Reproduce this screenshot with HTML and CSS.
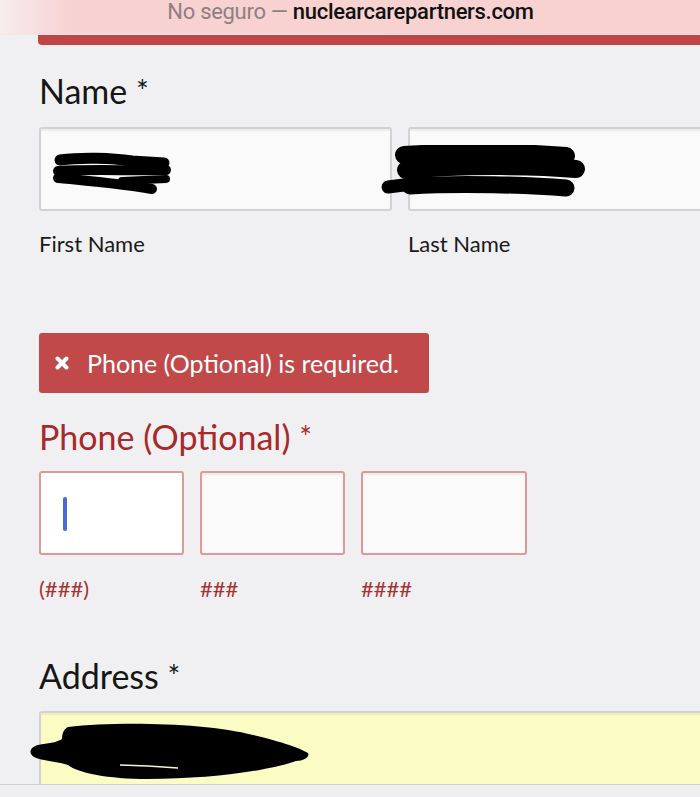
FILE: index.html
```html
<!DOCTYPE html>
<html lang="en">
<head>
<meta charset="utf-8">
<title>Form</title>
<link rel="stylesheet" href="styles.css">
</head>
<body>
<header class="urlbar">
  <span class="url-muted">No seguro — </span><span class="url-host">nuclearcarepartners.com</span>
</header>
<main class="page">
  <div class="topline"></div>
  <form class="form">
    <section class="field field-name">
      <h2 class="field-title">Name <span class="req">*</span></h2>
      <div class="row">
        <div class="col col-name">
          <div class="input"></div>
          <div class="sublabel">First Name</div>
        </div>
        <div class="col col-name">
          <div class="input"></div>
          <div class="sublabel">Last Name</div>
        </div>
      </div>
      <svg class="redact redact-first" width="130" height="50" viewBox="0 0 130 50" aria-hidden="true">
        <g fill="none" stroke="#000" stroke-linecap="round" stroke-linejoin="round">
          <path d="M8 9 C30 6 60 7 80 10 L112 12" stroke-width="11"/>
          <path d="M6 20 C40 18 80 20 114 19" stroke-width="10"/>
          <path d="M6 27 C40 30 70 33 100 38" stroke-width="10"/>
          <path d="M70 30 L114 28" stroke-width="8"/>
        </g>
      </svg>
      <svg class="redact redact-last" width="215" height="60" viewBox="0 0 215 60" aria-hidden="true">
        <g fill="none" stroke="#000" stroke-linecap="round" stroke-linejoin="round">
          <path d="M24 10 C70 7 140 7 186 11" stroke-width="18"/>
          <path d="M26 25 C80 20 150 20 196 24" stroke-width="18"/>
          <path d="M30 41 C80 38 150 40 186 43" stroke-width="17"/>
          <path d="M8 42 L40 38" stroke-width="13"/>
        </g>
      </svg>
    </section>

    <div class="alert">
      <svg class="alert-x" width="14" height="14" viewBox="0 0 14 14" aria-hidden="true">
        <path d="M2.5 2.5 L11.5 11.5 M11.5 2.5 L2.5 11.5" stroke="#fff" stroke-width="4" stroke-linecap="round"/>
      </svg>
      <span>Phone (Optional) is required.</span>
    </div>

    <section class="field field-error">
      <h2 class="field-title">Phone (Optional) <span class="req">*</span></h2>
      <div class="row">
        <div class="col col-area">
          <div class="input input-err input-focus"><span class="caret"></span></div>
          <div class="sublabel">(###)</div>
        </div>
        <div class="col col-area">
          <div class="input input-err"></div>
          <div class="sublabel">###</div>
        </div>
        <div class="col col-line">
          <div class="input input-err"></div>
          <div class="sublabel">####</div>
        </div>
      </div>
    </section>

    <section class="field field-address">
      <h2 class="field-title">Address <span class="req">*</span></h2>
      <div class="input input-auto"></div>
      <svg class="redact redact-addr" width="290" height="64" viewBox="0 0 290 64" aria-hidden="true">
        <path d="M40 8 C90 2 180 4 225 16 C250 22 262 26 272 30 L280 34 C282 38 276 42 268 42 C240 52 180 60 120 60 C80 60 50 54 40 46 C28 42 14 42 6 38 C0 34 2 28 10 26 C20 24 28 24 34 20 C34 14 36 10 40 8 Z" fill="#000"/>
        <path d="M92 46 L120 47 L150 49" stroke="#f4f4d0" stroke-width="1.5" fill="none"/>
      </svg>
    </section>
  </form>
</main>
<footer class="toolbar"></footer>
</body>
</html>
```

FILE: styles.css
```css
html, body {
  margin: 0;
  padding: 0;
}
body {
  width: 700px;
  height: 797px;
  overflow: hidden;
  background: #f0f0f3;
  font-family: Lato, "Open Sans", sans-serif;
  color: #111;
  position: relative;
}
.urlbar {
  height: 35px;
  box-sizing: border-box;
  border-bottom: 1px solid #f6e6e6;
  background: linear-gradient(to right, #f6eded 0px, #f8d2d2 70px, #f8d0d0 100%);
  font-family: Roboto, "Liberation Sans", sans-serif;
  font-size: 22px;
  line-height: 24px;
  text-align: center;
  padding-left: 1px;
  letter-spacing: -0.3px;
}
.url-muted {
  color: #8e8080;
}
.url-host {
  color: #111;
  font-weight: 500;
}
.page {
  padding-left: 39px;
}
.topline {
  height: 10px;
  margin-left: -1px;
  background: #c04545;
  border-bottom-left-radius: 4px;
}
.form {
  display: flex;
  flex-direction: column;
}
.field {
  position: relative;
}
.field-title {
  margin: 0;
  font-weight: 400;
  font-size: 34px;
  line-height: 40px;
  color: #161616;
}
.field-name .field-title {
  margin-top: 25px;
}
.req {
  font-size: 30px;
  vertical-align: 2px;
}
.row {
  display: flex;
  gap: 16px;
  margin-top: 16px;
}
.col-name {
  flex: 0 0 353px;
}
.col-area {
  flex: 0 0 145px;
}
.col-line {
  flex: 0 0 166px;
}
.input {
  height: 84px;
  box-sizing: border-box;
  border: 2px solid #d2d2d2;
  border-radius: 3px;
  background: #fafafa;
  box-shadow: inset 0 2px 2px rgba(0, 0, 0, 0.06);
  position: relative;
}
.sublabel {
  margin-top: 20px;
  font-size: 22px;
  line-height: 26px;
  color: #1a1a1a;
}
.redact {
  position: absolute;
}
.redact-first {
  left: 13px;
  top: 106px;
}
.redact-last {
  left: 341px;
  top: 100px;
}
.alert {
  margin-top: 76px;
  width: 390px;
  height: 60px;
  box-sizing: border-box;
  background: #c1494a;
  border-radius: 3px;
  color: #fff;
  font-size: 25px;
  line-height: 30px;
  padding-left: 16px;
  display: flex;
  align-items: center;
}
.alert-x {
  flex: 0 0 14px;
  margin-right: 18px;
}
.field-error {
  margin-top: 23px;
}
.field-error .field-title {
  color: #a72a2a;
}
.field-error .row {
  margin-top: 14px;
}
.input-err {
  border-color: #dc9a9a;
}
.input-focus {
  background: #fff;
  box-shadow: none;
}
.caret {
  position: absolute;
  left: 22px;
  top: 24px;
  width: 4px;
  height: 34px;
  border-radius: 2px;
  background: #4a67dc;
}
.field-error .sublabel {
  color: #a83232;
  margin-top: 21px;
}
.field-address {
  margin-top: 53px;
}
.field-address .input {
  margin-top: 15px;
  margin-right: -20px;
  height: 90px;
}
.input-auto {
  background: #fafcc4;
}
.redact-addr {
  left: -11px;
  top: 64px;
}
.toolbar {
  position: absolute;
  left: 0;
  right: 0;
  bottom: 0;
  height: 12px;
  background: #efeff2;
  border-top: 1px solid #cfcfd2;
}
```
